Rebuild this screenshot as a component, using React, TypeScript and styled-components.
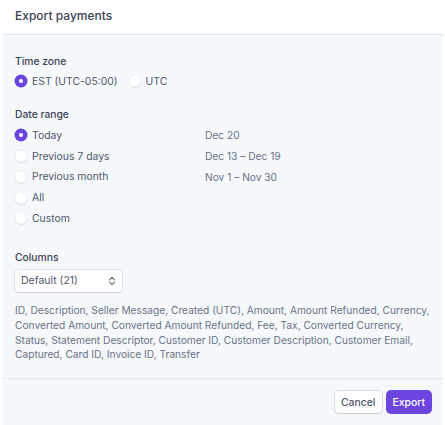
import React from "react";
import styled, { createGlobalStyle } from "styled-components";

const Global = createGlobalStyle`
  html, body { margin: 0; padding: 0; background: #ffffff; }
  body { font-family: Inter, "Noto Sans", "Liberation Sans", sans-serif; -webkit-font-smoothing: antialiased; }
  * { box-sizing: border-box; }
`;

const Dialog = styled.div`
  margin: 0 2px;
  width: 441px;
  height: 425px;
  display: flex;
  flex-direction: column;
  background: #f6f9fc;
`;

const Header = styled.header`
  height: 35px;
  flex: none;
  display: flex;
  align-items: flex-start;
  padding: 8px 13px 0;
  background: #ffffff;
  border-bottom: 1px solid #e3e8ee;
`;

const Title = styled.h1`
  margin: 0;
  font-size: 12px;
  line-height: 15px;
  font-weight: 500;
  color: #3c4257;
`;

const Body = styled.div`
  padding: 18px 13px 16px;
  display: flex;
  flex-direction: column;
  border-bottom: 1px solid #e3e8ee;
`;

const Section = styled.section<{ $gap?: number }>`
  display: flex;
  flex-direction: column;
  margin-top: ${(p) => p.$gap ?? 0}px;
`;

const Label = styled.div`
  font-size: 10.3px;
  line-height: 16px;
  font-weight: 500;
  color: #3c4257;
`;

const InlineRow = styled.div`
  display: flex;
  align-items: center;
  gap: 11px;
  height: 20px;
  margin-top: 2px;
`;

const List = styled.div`
  display: flex;
  flex-direction: column;
  margin-top: 3px;
`;

const RangeRow = styled.div`
  display: grid;
  grid-template-columns: 190px 1fr;
  align-items: center;
  height: 20.75px;
`;

const Option = styled.label`
  display: flex;
  align-items: center;
  gap: 5px;
  font-size: 10.4px;
  color: #4f566b;
  cursor: pointer;
`;

const Radio = styled.span<{ $checked?: boolean }>`
  width: 12px;
  height: 12px;
  border-radius: 50%;
  flex: none;
  background: ${(p) => (p.$checked ? "#6c45e0" : "#ffffff")};
  box-shadow: ${(p) =>
    p.$checked
      ? "0 0 0 0.5px #6c45e0"
      : "0 0 0 0.5px rgba(60,66,87,0.12), 0 1px 1px rgba(0,0,0,0.08)"};
  display: flex;
  align-items: center;
  justify-content: center;
  &::after {
    content: "";
    width: 4px;
    height: 4px;
    border-radius: 50%;
    background: #ffffff;
    display: ${(p) => (p.$checked ? "block" : "none")};
  }
`;

const DateText = styled.span`
  font-size: 10.2px;
  color: #697386;
`;

const Select = styled.div`
  margin-top: 5px;
  width: 107px;
  height: 22px;
  display: flex;
  align-items: center;
  justify-content: space-between;
  padding: 0 6px 0 6px;
  background: #ffffff;
  border-radius: 4px;
  box-shadow: 0 0 0 1px rgba(60,66,87,0.12), 0 1px 1px rgba(0,0,0,0.08);
  font-size: 10.5px;
  color: #4f566b;
`;

const ColumnList = styled.p`
  margin: 11px 0 0;
  font-size: 10.2px;
  line-height: 14.9px;
  color: #697386;
  white-space: nowrap;
`;

const Footer = styled.footer`
  display: flex;
  justify-content: flex-end;
  gap: 5px;
  padding: 12px 12px 0;
`;

const Button = styled.button<{ $primary?: boolean }>`
  height: 22px;
  padding: 0 6px;
  border: none;
  border-radius: 4px;
  font-family: inherit;
  font-size: 10.4px;
  font-weight: 500;
  cursor: pointer;
  color: ${(p) => (p.$primary ? "#ffffff" : "#4f566b")};
  background: ${(p) => (p.$primary ? "#6c45e0" : "#ffffff")};
  box-shadow: ${(p) =>
    p.$primary
      ? "0 0 0 1px #6c45e0, 0 1px 1px rgba(0,0,0,0.08)"
      : "0 0 0 1px rgba(60,66,87,0.14), 0 1px 1px rgba(0,0,0,0.08)"};
`;

const ranges = [
  { label: "Today", date: "Dec 20", checked: true },
  { label: "Previous 7 days", date: "Dec 13 \u2013 Dec 19" },
  { label: "Previous month", date: "Nov 1 \u2013 Nov 30" },
  { label: "All", date: "" },
  { label: "Custom", date: "" },
];

const columnLines = [
  "ID, Description, Seller Message, Created (UTC), Amount, Amount Refunded, Currency,",
  "Converted Amount, Converted Amount Refunded, Fee, Tax, Converted Currency,",
  "Status, Statement Descriptor, Customer ID, Customer Description, Customer Email,",
  "Captured, Card ID, Invoice ID, Transfer",
];

const Chevrons = () => (
  <svg width="8" height="10" viewBox="0 0 8 10" fill="none" stroke="#697386" strokeWidth="1.1" strokeLinecap="round" strokeLinejoin="round">
    <path d="M1.5 3.8 L4 1.3 L6.5 3.8" />
    <path d="M1.5 6.2 L4 8.7 L6.5 6.2" />
  </svg>
);

export default function App() {
  return (
    <>
      <Global />
      <Dialog>
        <Header>
          <Title>Export payments</Title>
        </Header>
        <Body>
          <Section>
            <Label>Time zone</Label>
            <InlineRow>
              <Option>
                <Radio $checked />
                EST (UTC-05:00)
              </Option>
              <Option>
                <Radio />
                UTC
              </Option>
            </InlineRow>
          </Section>
          <Section $gap={15}>
            <Label>Date range</Label>
            <List>
              {ranges.map((r) => (
                <RangeRow key={r.label}>
                  <Option>
                    <Radio $checked={r.checked} />
                    {r.label}
                  </Option>
                  <DateText>{r.date}</DateText>
                </RangeRow>
              ))}
            </List>
          </Section>
          <Section $gap={20}>
            <Label>Columns</Label>
            <Select>
              <span>Default (21)</span>
              <Chevrons />
            </Select>
            <ColumnList>
              {columnLines.map((line, i) => (
                <React.Fragment key={i}>
                  {line}
                  {i < columnLines.length - 1 && <br />}
                </React.Fragment>
              ))}
            </ColumnList>
          </Section>
        </Body>
        <Footer>
          <Button>Cancel</Button>
          <Button $primary>Export</Button>
        </Footer>
      </Dialog>
    </>
  );
}
